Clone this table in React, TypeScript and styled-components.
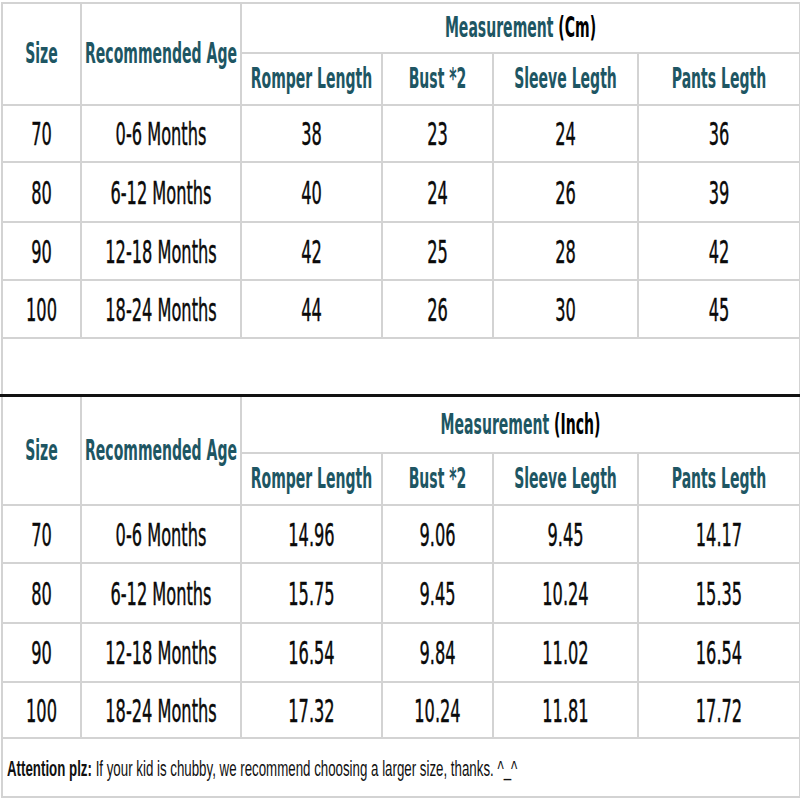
import React from "react";
import styled, { createGlobalStyle } from "styled-components";

const GlobalStyle = createGlobalStyle`
  html, body { margin: 0; padding: 0; background: #ffffff; }
`;

const Sheet = styled.div`
  width: 800px;
  height: 800px;
  padding-top: 2px;
  box-sizing: border-box;
  overflow: hidden;
  background: #ffffff;
`;

const Grid = styled.table`
  width: 798px;
  margin-left: 1px;
  border-collapse: collapse;
  table-layout: fixed;
`;

const Row = styled.tr<{ $h: number }>`
  height: ${(p) => p.$h}px;
`;

const Cell = styled.td<{ $noBottom?: boolean; $noTop?: boolean }>`
  border: 2px solid #d3d3d3;
  ${(p) => (p.$noBottom ? "border-bottom: none;" : "")}
  ${(p) => (p.$noTop ? "border-top: none;" : "")}
  padding: 0;
  text-align: center;
  vertical-align: middle;
  overflow: visible;
  white-space: nowrap;
`;

const NoteCell = styled(Cell)`
  text-align: left;
  padding-left: 4px;
`;

const Label = styled.span`
  display: inline-block;
  font-family: "DejaVu Sans Condensed", "DejaVu Sans", sans-serif;
  font-weight: bold;
  font-size: 15.6px;
  color: #1e5663;
  transform: scaleY(1.85);
  white-space: nowrap;
`;

const Unit = styled.span`
  color: #000000;
`;

const Value = styled.span`
  display: inline-block;
  font-family: "DejaVu Sans Condensed", "DejaVu Sans", sans-serif;
  font-size: 18px;
  color: #0a0a0a;
  transform: scaleY(1.75);
  white-space: nowrap;
  -webkit-text-stroke: 0.25px #0a0a0a;
`;

const Divider = styled.div`
  width: 800px;
  height: 3px;
  background: #111111;
`;

const Note = styled.span`
  display: inline-block;
  font-family: "Liberation Sans", Arial, sans-serif;
  font-size: 13.3px;
  color: #111111;
  transform: scaleY(1.6);
  transform-origin: left center;
  white-space: nowrap;
`;

const Strong = styled.b`
  font-weight: bold;
`;

const COLS = [79, 160, 141, 111, 145, 162];

type Line = [string, string, string, string, string, string];

const cmRows: Line[] = [
  ["70", "0-6 Months", "38", "23", "24", "36"],
  ["80", "6-12 Months", "40", "24", "26", "39"],
  ["90", "12-18 Months", "42", "25", "28", "42"],
  ["100", "18-24 Months", "44", "26", "30", "45"],
];

const inchRows: Line[] = [
  ["70", "0-6 Months", "14.96", "9.06", "9.45", "14.17"],
  ["80", "6-12 Months", "15.75", "9.45", "10.24", "15.35"],
  ["90", "12-18 Months", "16.54", "9.84", "11.02", "16.54"],
  ["100", "18-24 Months", "17.32", "10.24", "11.81", "17.72"],
];

const ColGroup = () => (
  <colgroup>
    {COLS.map((w, i) => (
      <col key={i} style={{ width: w }} />
    ))}
  </colgroup>
);

const Header = ({ unit, topH, subH, noTop }: { unit: string; topH: number; subH: number; noTop?: boolean }) => (
  <>
    <Row $h={topH}>
      <Cell rowSpan={2} $noTop={noTop}>
        <Label>Size</Label>
      </Cell>
      <Cell rowSpan={2} $noTop={noTop}>
        <Label>Recommended Age</Label>
      </Cell>
      <Cell colSpan={4} $noTop={noTop}>
        <Label>
          Measurement <Unit>({unit})</Unit>
        </Label>
      </Cell>
    </Row>
    <Row $h={subH}>
      <Cell>
        <Label>Romper Length</Label>
      </Cell>
      <Cell>
        <Label>Bust *2</Label>
      </Cell>
      <Cell>
        <Label>Sleeve Legth</Label>
      </Cell>
      <Cell>
        <Label>Pants Legth</Label>
      </Cell>
    </Row>
  </>
);

const DataRows = ({ rows, heights }: { rows: Line[]; heights: number[] }) => (
  <>
    {rows.map((r, i) => (
      <Row key={i} $h={heights[i]}>
        {r.map((v, j) => (
          <Cell key={j}>
            <Value>{v}</Value>
          </Cell>
        ))}
      </Row>
    ))}
  </>
);

export default function App() {
  return (
    <>
      <GlobalStyle />
      <Sheet>
        <Grid>
          <ColGroup />
          <tbody>
            <Header unit="Cm" topH={50} subH={52} />
            <DataRows rows={cmRows} heights={[57, 60, 58, 58]} />
            <Row $h={56}>
              <Cell colSpan={6} $noBottom />
            </Row>
          </tbody>
        </Grid>
        <Divider />
        <Grid>
          <ColGroup />
          <tbody>
            <Header unit="Inch" topH={56} subH={52} noTop />
            <DataRows rows={inchRows} heights={[58, 60, 59, 56]} />
            <Row $h={59}>
              <NoteCell colSpan={6}>
                <Note>
                  <Strong>Attention plz:</Strong> If your kid is chubby, we recommend choosing a larger size, thanks. ^_^
                </Note>
              </NoteCell>
            </Row>
          </tbody>
        </Grid>
      </Sheet>
    </>
  );
}
